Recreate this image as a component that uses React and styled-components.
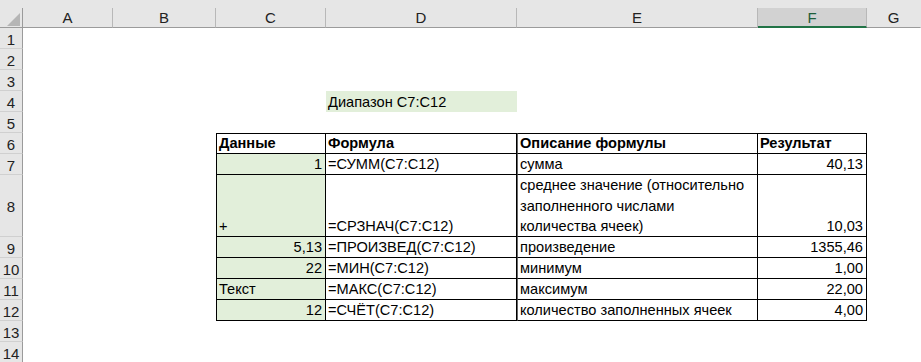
import React from "react";
import styled, { createGlobalStyle } from "styled-components";

const GlobalStyle = createGlobalStyle`
  body {
    margin: 0;
    background: #fff;
    font-family: "Liberation Sans", Arial, sans-serif;
  }
`;

const Sheet = styled.div`
  display: grid;
  grid-template-columns: 23px 90px 103px 110px 191px 241px 109px 1fr;
  grid-template-rows: 8px 20px repeat(7, 21px) 62px repeat(6, 21px);
  width: 921px;
  height: 362px;
  overflow: hidden;
  font-size: 14.6px;
  color: #000;
`;

const TopBand = styled.div`
  grid-column: 1 / -1;
  background: #e6e6e6;
`;

const Corner = styled.div`
  position: relative;
  background: #e6e6e6;
  border-right: 1px solid #9b9b9b;
  border-bottom: 1px solid #9b9b9b;
  box-sizing: border-box;
`;

const CornerMark = styled.svg`
  position: absolute;
  left: 6px;
  top: 4px;
`;

const ColHeader = styled.div`
  display: flex;
  align-items: center;
  justify-content: center;
  box-sizing: border-box;
  font-size: 15px;
  background: ${(p) => (p.$selected ? "#d2d2d2" : "#e6e6e6")};
  border-right: 1px solid ${(p) => (p.$last ? "transparent" : "#b8b8b8")};
  border-bottom: ${(p) => (p.$selected ? "2px solid #217346" : "1px solid #9b9b9b")};
  color: ${(p) => (p.$selected ? "#1e5e3a" : "#222")};
  padding-bottom: ${(p) => (p.$selected ? "0" : "1px")};
`;

const RowHeader = styled.div`
  display: flex;
  align-items: center;
  justify-content: center;
  box-sizing: border-box;
  font-size: 15px;
  background: #e6e6e6;
  border-right: 1px solid #9b9b9b;
  border-bottom: 1px solid #d0d0d0;
  color: #222;
  padding-top: 2px;
`;

const Cell = styled.div`
  display: flex;
  align-items: flex-end;
  justify-content: ${(p) => (p.$align === "right" ? "flex-end" : "flex-start")};
  box-sizing: border-box;
  padding: 0 3px 0 2px;
  line-height: 19px;
  white-space: nowrap;
  background: ${(p) => (p.$fill ? "#e2efda" : "#fff")};
  font-weight: ${(p) => (p.$bold ? "bold" : "normal")};
  border-top: ${(p) => (p.$top ? "1px solid #000" : "0")};
  border-left: ${(p) =>
    p.$thick ? "1px solid #666" : p.$left ? "1px solid #000" : "0"};
  border-right: ${(p) => (p.$boxed ? "1px solid #000" : "0")};
  border-bottom: ${(p) => (p.$boxed ? "1px solid #000" : "0")};
`;

const Wrapped = styled.div`
  line-height: 20.6px;
  margin-bottom: -1px;
`;

const columns = ["A", "B", "C", "D", "E", "F", "G"];

const table = {
  6: [
    { text: "Данные", bold: true },
    { text: "Формула", bold: true },
    { text: "Описание формулы", bold: true },
    { text: "Результат", bold: true },
  ],
  7: [
    { text: "1", align: "right" },
    { text: "=СУММ(C7:C12)" },
    { text: "сумма" },
    { text: "40,13", align: "right" },
  ],
  8: [
    { text: "+" },
    { text: "=СРЗНАЧ(C7:C12)" },
    {
      lines: [
        "среднее значение (относительно",
        "заполненного числами",
        "количества ячеек)",
      ],
    },
    { text: "10,03", align: "right" },
  ],
  9: [
    { text: "5,13", align: "right" },
    { text: "=ПРОИЗВЕД(C7:C12)" },
    { text: "произведение" },
    { text: "1355,46", align: "right" },
  ],
  10: [
    { text: "22", align: "right" },
    { text: "=МИН(C7:C12)" },
    { text: "минимум" },
    { text: "1,00", align: "right" },
  ],
  11: [
    { text: "Текст" },
    { text: "=МАКС(C7:C12)" },
    { text: "максимум" },
    { text: "22,00", align: "right" },
  ],
  12: [
    { text: "12", align: "right" },
    { text: "=СЧЁТ(C7:C12)" },
    { text: "количество заполненных ячеек" },
    { text: "4,00", align: "right" },
  ],
};

function renderCell(row, colIndex) {
  const key = `${row}-${colIndex}`;
  if (row === 4 && colIndex === 3) {
    return (
      <Cell key={key} $fill>
        Диапазон C7:C12
      </Cell>
    );
  }
  const data = table[row];
  if (!data || colIndex < 2 || colIndex > 5) return <Cell key={key} />;

  const item = data[colIndex - 2];
  return (
    <Cell
      key={key}
      $boxed
      $top={row === 6}
      $left={colIndex === 2}
      $thick={colIndex === 4}
      $fill={colIndex === 2 && row > 6}
      $bold={item.bold}
      $align={item.align}
    >
      {item.lines ? (
        <Wrapped>
          {item.lines.map((line) => (
            <div key={line}>{line}</div>
          ))}
        </Wrapped>
      ) : (
        item.text
      )}
    </Cell>
  );
}

export default function App() {
  const rows = Array.from({ length: 14 }, (_, i) => i + 1);

  return (
    <>
      <GlobalStyle />
      <Sheet>
        <TopBand />
        <Corner>
          <CornerMark width="15" height="15" viewBox="0 0 15 15">
            <polygon points="1,14 14,1 14,14" fill="#b5b5b5" />
          </CornerMark>
        </Corner>
        {columns.map((c, i) => (
          <ColHeader key={c} $selected={c === "F"} $last={i === columns.length - 1}>
            {c}
          </ColHeader>
        ))}

        {rows.map((row) => (
          <React.Fragment key={row}>
            <RowHeader>{row}</RowHeader>
            {columns.map((_, i) => renderCell(row, i))}
          </React.Fragment>
        ))}
      </Sheet>
    </>
  );
}
